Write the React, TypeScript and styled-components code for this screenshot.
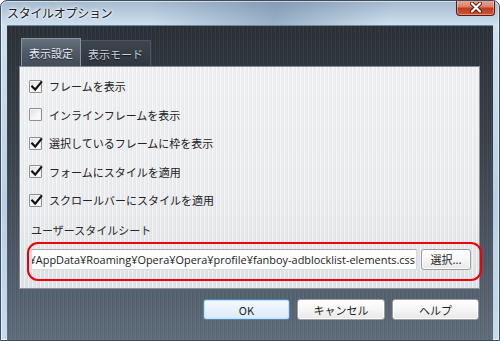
import React from "react";
import styled, { createGlobalStyle, css } from "styled-components";

const GlobalStyle = createGlobalStyle`
  html, body { margin: 0; padding: 0; background: #ffffff; }
  body { font-family: "Noto Sans CJK JP", "Noto Sans", sans-serif; }
  * { box-sizing: border-box; }
`;

const Window = styled.div`
  width: 500px;
  height: 341px;
  display: flex;
  flex-direction: column;
  border: 1px solid #3e4e60;
  border-radius: 7px 7px 0 0;
  overflow: hidden;
  background:
    linear-gradient(100deg, rgba(255,255,255,0) 30%, rgba(80,110,140,0.4) 55%, rgba(255,255,255,0) 78%) top / 100% 24px no-repeat,
    linear-gradient(to bottom, #a4bace 0px, #bcd0e2 14px, #cfe1f0 24px, #b9d0e4 60%, #c6dbec 100%);
  box-shadow: inset 0 0 0 1px rgba(255,255,255,0.55);
`;

const TitleBar = styled.div`
  height: 24px;
  display: flex;
  align-items: flex-start;
  justify-content: space-between;
  padding-left: 6px;
  padding-right: 4px;
`;

const Title = styled.div`
  padding-top: 3px;
  font-size: 12px;
  line-height: 17px;
  color: #151a20;
  letter-spacing: -0.3px;
  text-shadow: 0 0 6px #ffffff, 0 0 3px #ffffff, 0 0 2px #ffffff;
`;

const CloseButton = styled.div`
  width: 39px;
  height: 16px;
  margin-top: -1px;
  display: flex;
  align-items: center;
  justify-content: center;
  border: 1px solid #5a1c14;
  border-top: none;
  border-radius: 0 0 4px 4px;
  background: linear-gradient(to bottom, #e9ad9d 0%, #d98068 45%, #c23a20 55%, #cc5533 100%);
  box-shadow: inset 0 0 0 1px rgba(255,220,200,0.45);
`;

const Client = styled.div`
  flex: 1;
  margin: 0 6px;
  display: flex;
  flex-direction: column;
  padding: 13px 13px 0 12px;
  background:
    repeating-linear-gradient(90deg, rgba(255,255,255,0.035) 0 1px, rgba(0,0,0,0.04) 1px 2px, transparent 2px 4px),
    linear-gradient(to bottom, #2b3137 0%, #3b434d 40%, #4f5a67 75%, #5f6c7a 100%);
  box-shadow: inset 0 1px 0 #6f879c;
`;

const TabRow = styled.div`
  display: flex;
  align-items: flex-end;
  height: 28px;
  padding-left: 2px;
`;

const Tab = styled.div<{ $active?: boolean }>`
  display: flex;
  align-items: center;
  justify-content: center;
  font-size: 11px;
  ${(p) =>
    p.$active
      ? css`
          width: 60px;
          height: 28px;
          color: #e4eaf0;
          border: 1px solid #8794a1;
          border-bottom: none;
          background: linear-gradient(to bottom, #66717d 0%, #4f5a66 50%, #434d58 100%);
          text-shadow: 0 1px 1px rgba(0,0,0,0.6);
        `
      : css`
          width: 70px;
          height: 26px;
          color: #c9d0d7;
          border: 1px solid #4d5660;
          border-left: none;
          border-bottom: none;
          background: linear-gradient(to bottom, #3c444d 0%, #30373f 100%);
          text-shadow: 0 1px 1px rgba(0,0,0,0.7);
        `}
`;

const Panel = styled.div`
  height: 223px;
  display: flex;
  flex-direction: column;
  padding: 5px 0 0 9px;
  border: 1px solid rgba(40,50,60,0.5);
  background:
    repeating-linear-gradient(90deg, rgba(255,255,255,0.5) 0 1px, transparent 1px 3px, rgba(0,0,0,0.015) 3px 4px),
    linear-gradient(to bottom, #edeff1 0%, #e9ebee 60%, #dee1e5 100%);
  color: #222222;
`;

const Row = styled.div`
  height: 28.5px;
  display: flex;
  align-items: center;
  gap: 7px;
  font-size: 11px;
`;

const Box = styled.div`
  width: 13px;
  height: 13px;
  position: relative;
  border: 1px solid #8e8f90;
  border-radius: 1px;
  background: linear-gradient(135deg, #dcdcdc 0%, #f6f6f6 60%, #ffffff 100%);
  box-shadow: inset 0 0 0 1px #f4f4f4;
`;

const Check = styled.svg`
  position: absolute;
  left: 0px;
  top: -2px;
`;

const Label = styled.div`
  margin: 7px 0 0 2px;
  height: 16px;
  line-height: 16px;
  font-size: 11px;
  color: #2a2a2a;
`;

const FileRow = styled.div`
  position: relative;
  margin: 11px 0 0 2px;
  display: flex;
  gap: 4px;
  height: 21px;
  &::after {
    content: "";
    position: absolute;
    top: -7px;
    left: -4px;
    right: -3px;
    bottom: -11px;
    border: 2px solid #ee0008;
    border-radius: 11px;
    pointer-events: none;
  }
`;

const PathField = styled.div`
  width: 386px;
  height: 21px;
  display: flex;
  align-items: center;
  justify-content: flex-end;
  overflow: hidden;
  padding-right: 1px;
  background: #ffffff;
  border: 1px solid #d5dbe1;
  border-top-color: #abadb3;
  font-family: "Open Sans", "Noto Sans CJK JP", sans-serif;
  font-size: 10.93px;
  color: #1a1a1a;
  white-space: nowrap;
`;

const Button = styled.div<{ $default?: boolean; $w: number }>`
  width: ${(p) => p.$w}px;
  height: 21px;
  display: flex;
  align-items: center;
  justify-content: center;
  font-size: 11px;
  color: #1e1e1e;
  border-radius: 3px;
  border: 1px solid ${(p) => (p.$default ? "#4f87b8" : "#9a9c9e")};
  background: ${(p) =>
    p.$default
      ? "linear-gradient(to bottom, #f4f9fd 0%, #e8f2fb 50%, #dbe9f6 100%)"
      : "linear-gradient(to bottom, #ffffff 0%, #f6f6f6 50%, #e8e8e8 100%)"};
  box-shadow: inset 0 0 0 1px ${(p) => (p.$default ? "#c5e0f6" : "rgba(255,255,255,0.8)")};
`;

const ButtonRow = styled.div`
  margin-top: 10px;
  margin-right: 1px;
  display: flex;
  justify-content: flex-end;
  gap: 7px;
`;

const options = [
  { label: "フレームを表示", checked: true },
  { label: "インラインフレームを表示", checked: false },
  { label: "選択しているフレームに枠を表示", checked: true },
  { label: "フォームにスタイルを適用", checked: true },
  { label: "スクロールバーにスタイルを適用", checked: true },
];

const CheckBox = ({ checked }: { checked: boolean }) => (
  <Box>
    {checked && (
      <Check width="14" height="14" viewBox="0 0 14 14">
        <path d="M2.2 7.6 L5.2 10.6 L11.2 3.2" fill="none" stroke="#111" strokeWidth="2.2" strokeLinecap="square" />
      </Check>
    )}
  </Box>
);

export default function App() {
  return (
    <>
      <GlobalStyle />
      <Window>
        <TitleBar>
          <Title>スタイルオプション</Title>
          <CloseButton>
            <svg width="12" height="11" viewBox="0 0 12 11">
              <path d="M2 1.5 L10 9.5 M10 1.5 L2 9.5" stroke="#4a1a10" strokeWidth="4" strokeLinecap="round" />
              <path d="M2 1.5 L10 9.5 M10 1.5 L2 9.5" stroke="#ffffff" strokeWidth="2.2" strokeLinecap="round" />
            </svg>
          </CloseButton>
        </TitleBar>
        <Client>
          <TabRow>
            <Tab $active>表示設定</Tab>
            <Tab>表示モード</Tab>
          </TabRow>
          <Panel>
            {options.map((o) => (
              <Row key={o.label}>
                <CheckBox checked={o.checked} />
                <span>{o.label}</span>
              </Row>
            ))}
            <Label>ユーザースタイルシート</Label>
            <FileRow>
              <PathField>
                <span>C:¥Users¥user¥AppData¥Roaming¥Opera¥Opera¥profile¥fanboy-adblocklist-elements.css</span>
              </PathField>
              <Button $w={50}>選択...</Button>
            </FileRow>
          </Panel>
          <ButtonRow>
            <Button $default $w={87}>OK</Button>
            <Button $w={88}>キャンセル</Button>
            <Button $w={87}>ヘルプ</Button>
          </ButtonRow>
        </Client>
      </Window>
    </>
  );
}
